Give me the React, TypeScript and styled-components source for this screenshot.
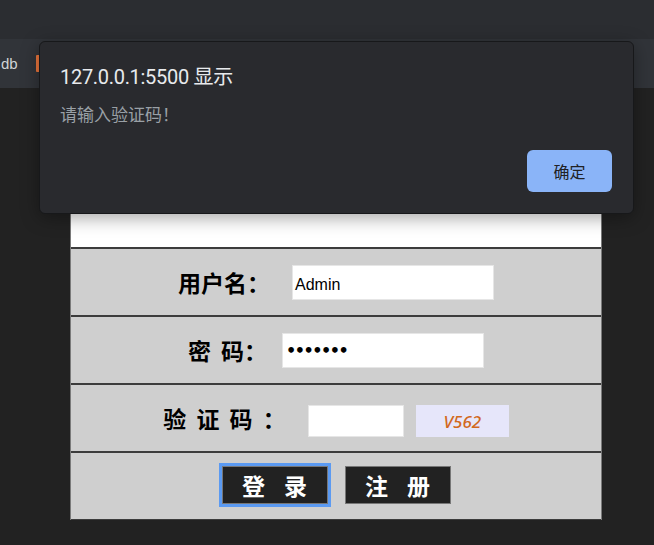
import React from "react";
import styled, { createGlobalStyle } from "styled-components";

const Global = createGlobalStyle`
  html, body { margin: 0; padding: 0; }
  body {
    background: #222222;
    width: 654px;
    height: 545px;
    overflow: hidden;
    font-family: "Noto Sans CJK SC", "Noto Sans", sans-serif;
  }
`;

const Screen = styled.div`
  position: relative;
  width: 654px;
  height: 545px;
  background: #222222;
  overflow: hidden;
`;

const TopBar = styled.div`
  height: 39px;
  background: #2b2d31;
`;

const TabBar = styled.div`
  height: 49px;
  background: #313439;
  display: flex;
  align-items: center;
  gap: 18px;
`;

const TabText = styled.span`
  font-family: "Liberation Sans", Arial, sans-serif;
  font-size: 15px;
  color: #d0d3d6;
  padding-left: 1px;
`;

const OrangeMark = styled.span`
  width: 4px;
  height: 17px;
  border-radius: 1px;
  background: #e8743b;
`;

const Page = styled.div`
  padding-left: 70px;
`;

const Table = styled.div`
  width: 532px;
  display: flex;
  flex-direction: column;
  border-left: 1px solid #7a7a7a;
  border-right: 1px solid #7a7a7a;
  box-sizing: border-box;
`;

const Header = styled.div`
  height: 159px;
  background: #ffffff;
`;

const Row = styled.div<{ $gap: number }>`
  height: 66px;
  border-top: 2px solid #3c3c3c;
  background: #cfcfcf;
  display: flex;
  align-items: center;
  justify-content: center;
  gap: ${(p) => p.$gap}px;
  &:last-child {
    border-bottom: 1px solid #3c3c3c;
  }
`;

const Label = styled.span`
  font-family: "Noto Sans CJK SC", sans-serif;
  font-weight: 700;
  font-size: 23px;
  color: #000;
  word-spacing: 5px;
  white-space: pre;
  line-height: 1;
`;

const Field = styled.div<{ $w: number; $h: number }>`
  width: ${(p) => p.$w}px;
  height: ${(p) => p.$h}px;
  box-sizing: border-box;
  background: #ffffff;
  border: 1px solid #e6e6e6;
  display: flex;
  align-items: center;
  padding: 5px 0 0 2px;
  font-family: "Liberation Sans", Arial, sans-serif;
  font-size: 16px;
  color: #000;
`;

const Dots = styled.span`
  font-size: 16px;
  letter-spacing: -1.5px;
  font-family: "DejaVu Sans", sans-serif;
  font-weight: 700;
  padding-left: 1px;
  margin-top: -4px;
`;

const CodeGroup = styled.div`
  display: flex;
  gap: 12px;
  margin-top: 6px;
`;

const Captcha = styled.div`
  width: 93px;
  height: 32px;
  background: #e6e6fa;
  display: flex;
  align-items: center;
  justify-content: center;
  font-family: "Noto Sans", "Liberation Sans", sans-serif;
  font-style: italic;
  font-weight: 500;
  font-size: 17px;
  color: #d2691e;
`;

const ActionButton = styled.button<{ $focused?: boolean }>`
  width: 106px;
  height: 38px;
  box-sizing: border-box;
  background: #222222;
  border: 1px solid #777;
  color: #fff;
  font-family: "Noto Sans CJK SC", sans-serif;
  font-weight: 700;
  font-size: 23px;
  letter-spacing: 7px;
  padding: 0 0 0 7px;
  line-height: 1;
  white-space: pre;
  border-radius: 0;
  outline: ${(p) => (p.$focused ? "3px solid #5b9af2" : "none")};
  outline-offset: 0px;
`;

const ButtonRow = styled.div`
  display: flex;
  gap: 17px;
  align-items: center;
  margin-top: -2px;
`;

const Dialog = styled.div`
  position: absolute;
  left: 39px;
  top: 41px;
  width: 595px;
  height: 173px;
  box-sizing: border-box;
  background: #292a2e;
  border: 1px solid #17181a;
  border-radius: 6px;
  box-shadow: 0 4px 18px rgba(0, 0, 0, 0.35);
  padding: 22px 21px 21px 20px;
  display: flex;
  flex-direction: column;
`;

const DialogTitle = styled.div`
  font-family: Roboto, "Noto Sans CJK SC", sans-serif;
  font-size: 20px;
  color: #e8eaed;
  line-height: 26px;
  letter-spacing: -0.3px;
`;

const DialogMessage = styled.div`
  margin-top: 13px;
  font-family: "Noto Sans CJK SC", sans-serif;
  font-size: 17px;
  color: #9aa0a6;
  line-height: 22px;
`;

const DialogFooter = styled.div`
  margin-top: auto;
  display: flex;
  justify-content: flex-end;
`;

const OkButton = styled.button`
  width: 85px;
  height: 42px;
  border: none;
  border-radius: 6px;
  background: #8ab4f8;
  color: #202124;
  font-family: "Noto Sans CJK SC", sans-serif;
  font-size: 16px;
  padding: 0;
`;

export default function App() {
  return (
    <Screen>
      <Global />
      <TopBar />
      <TabBar>
        <TabText>db</TabText>
        <OrangeMark />
      </TabBar>
      <Page>
        <Table>
          <Header />
          <Row $gap={22}>
            <Label>用户名：</Label>
            <Field $w={202} $h={35}>Admin</Field>
          </Row>
          <Row $gap={15}>
            <Label>密 码：</Label>
            <Field $w={202} $h={35}>
              <Dots>•••••••</Dots>
            </Field>
          </Row>
          <Row $gap={22}>
            <Label>验 证 码 ：</Label>
            <CodeGroup>
              <Field $w={96} $h={32} />
              <Captcha>V562</Captcha>
            </CodeGroup>
          </Row>
          <Row $gap={0}>
            <ButtonRow>
              <ActionButton $focused>登 录</ActionButton>
              <ActionButton>注 册</ActionButton>
            </ButtonRow>
          </Row>
        </Table>
      </Page>
      <Dialog>
        <DialogTitle>127.0.0.1:5500 显示</DialogTitle>
        <DialogMessage>请输入验证码！</DialogMessage>
        <DialogFooter>
          <OkButton>确定</OkButton>
        </DialogFooter>
      </Dialog>
    </Screen>
  );
}
